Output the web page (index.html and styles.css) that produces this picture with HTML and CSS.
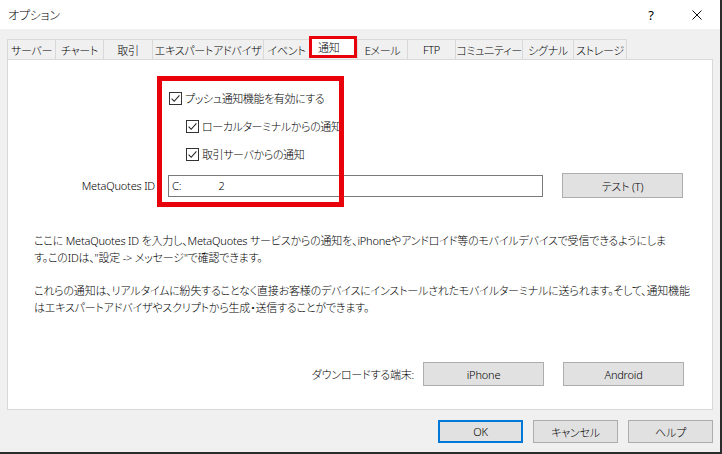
FILE: index.html
```html
<!DOCTYPE html>
<html lang="ja">
<head>
    <meta charset="UTF-8">
    <title>オプション</title>
    <link rel="stylesheet" href="styles.css">
</head>
<body>
    <div class="titlebar">
        <span class="title">オプション</span>
        <div class="caption-buttons">
            <span class="caption-btn help">?</span>
            <span class="caption-btn">
                <svg width="10" height="10" viewBox="0 0 10 10"><path d="M0.5 0.5 L9.5 9.5 M9.5 0.5 L0.5 9.5" stroke="#111" stroke-width="1"/></svg>
            </span>
        </div>
    </div>

    <div class="dialog">
        <div class="tabs">
            <div class="tab">サーバー</div>
            <div class="tab">チャート</div>
            <div class="tab">取引</div>
            <div class="tab">エキスパートアドバイザ</div>
            <div class="tab">イベント</div>
            <div class="tab active">通知</div>
            <div class="tab">Eメール</div>
            <div class="tab">FTP</div>
            <div class="tab">コミュニティー</div>
            <div class="tab">シグナル</div>
            <div class="tab last">ストレージ</div>
        </div>

        <div class="panel">
            <label class="check-row">
                <svg class="checkbox" width="13" height="13" viewBox="0 0 13 13"><rect x="0.5" y="0.5" width="12" height="12" fill="#fff" stroke="#333"/><path d="M2.6 6.6 L5.2 9.3 L10.4 3.4" fill="none" stroke="#222" stroke-width="1.1"/></svg>
                プッシュ通知機能を有効にする
            </label>
            <label class="check-row sub">
                <svg class="checkbox" width="13" height="13" viewBox="0 0 13 13"><rect x="0.5" y="0.5" width="12" height="12" fill="#fff" stroke="#333"/><path d="M2.6 6.6 L5.2 9.3 L10.4 3.4" fill="none" stroke="#222" stroke-width="1.1"/></svg>
                ローカルターミナルからの通知
            </label>
            <label class="check-row sub">
                <svg class="checkbox" width="13" height="13" viewBox="0 0 13 13"><rect x="0.5" y="0.5" width="12" height="12" fill="#fff" stroke="#333"/><path d="M2.6 6.6 L5.2 9.3 L10.4 3.4" fill="none" stroke="#222" stroke-width="1.1"/></svg>
                取引サーバからの通知
            </label>

            <div class="id-row">
                <span class="id-label">MetaQuotes ID</span>
                <input class="id-input" type="text" value="C:              2">
                <button class="btn">テスト (T)</button>
            </div>

            <p class="note">ここに MetaQuotes ID を入力し、MetaQuotes サービスからの通知を、iPhoneやアンドロイド等のモバイルデバイスで受信できるようにしま<br>す。このIDは、"設定 -> メッセージ"で確認できます。</p>
            <p class="note">これらの通知は、リアルタイムに紛失することなく直接お客様のデバイスにインストールされたモバイルターミナルに送られます。そして、通知機能<br>はエキスパートアドバイザやスクリプトから生成・送信することができます。</p>

            <div class="download-row">
                <span class="download-label">ダウンロードする端末:</span>
                <button class="btn">iPhone</button>
                <button class="btn">Android</button>
            </div>

            <!-- 赤枠（注釈） -->
            <div class="highlight"></div>
        </div>

        <div class="footer">
            <button class="btn ok">OK</button>
            <button class="btn">キャンセル</button>
            <button class="btn">ヘルプ</button>
        </div>
    </div>
</body>
</html>
```

FILE: styles.css
```css
body {
    margin: 0;
    width: 720px;
    height: 452px;
    background: #f0f0f0;
    border-right: 2px solid #2b2b2b;
    border-bottom: 2px solid #2b2b2b;
    font-family: "Noto Sans", "Noto Sans CJK JP", sans-serif;
    font-size: 11px;
    font-weight: 300;
    font-feature-settings: "palt";
    letter-spacing: -0.2px;
    color: #000;
    overflow: hidden;
}

.titlebar {
    height: 29px;
    background: #fff;
    display: flex;
    align-items: center;
    justify-content: space-between;
}

.title {
    padding-left: 8px;
    font-size: 12px;
}

.caption-buttons {
    display: flex;
    height: 100%;
}

.caption-btn {
    width: 46px;
    display: flex;
    align-items: center;
    justify-content: center;
}

.caption-btn.help {
    font-size: 13px;
    font-weight: 400;
}

.dialog {
    padding: 7px 7px 0 7px;
}

.tabs {
    display: grid;
    grid-template-columns: 48px 48px 49px 111px 46px 48px 50px 48px 67px 51px 54px;
    align-items: end;
    height: 23px;
}

.tab {
    height: 20px;
    box-sizing: border-box;
    border-top: 1px solid #d9d9d9;
    border-left: 1px solid #d9d9d9;
    display: flex;
    align-items: center;
    justify-content: center;
    white-space: nowrap;
    letter-spacing: -0.3px;
}

.tab.last {
    border-right: 1px solid #d9d9d9;
}

.tab.active {
    height: 22px;
    margin-bottom: 1px;
    background: #fff;
    border: 3px solid #e8000b;
    justify-content: flex-start;
    padding-left: 6px;
}

.panel {
    position: relative;
    height: 351px;
    box-sizing: border-box;
    background: #fff;
    border: 1px solid #d9d9d9;
    padding: 24px 28px 0 26px;
}

.check-row {
    display: flex;
    align-items: center;
    gap: 3px;
    height: 28px;
    margin-left: 135px;
    letter-spacing: -0.4px;
}

.check-row.sub {
    margin-left: 152px;
}

.id-row {
    display: flex;
    align-items: center;
    height: 25px;
    margin-top: 5px;
}

.id-label {
    width: 121px;
    text-align: right;
    margin-right: 13px;
}

.id-input {
    width: 375px;
    height: 22px;
    box-sizing: border-box;
    border: 1px solid #7a7a7a;
    padding: 0 3px;
    margin: 0 19px 0 0;
    font: inherit;
    font-feature-settings: "palt";
    letter-spacing: inherit;
    color: #000;
}

.btn {
    width: 121px;
    height: 25px;
    box-sizing: border-box;
    background: #e1e1e1;
    border: 1px solid #adadad;
    padding: 0;
    font: inherit;
    font-feature-settings: "palt";
    letter-spacing: inherit;
    color: #000;
}

.note {
    margin: 34px 0 0 0;
    line-height: 17px;
    white-space: nowrap;
}

.note + .note {
    margin-top: 16px;
}

.download-row {
    display: flex;
    align-items: center;
    justify-content: flex-end;
    gap: 19px;
    margin-top: 46px;
}

.download-row .btn {
    height: 24px;
}

.download-label {
    margin-right: -10px;
}

/* 赤枠の注釈 */
.highlight {
    position: absolute;
    left: 149px;
    top: 16px;
    width: 187px;
    height: 131px;
    box-sizing: border-box;
    border: 5px solid #e8000b;
    pointer-events: none;
}

.footer {
    display: flex;
    justify-content: flex-end;
    gap: 10px;
    margin-top: 10px;
}

.footer .btn {
    width: 85px;
    height: 23px;
}

.footer .btn.ok {
    border: 2px solid #0078d7;
}
```
